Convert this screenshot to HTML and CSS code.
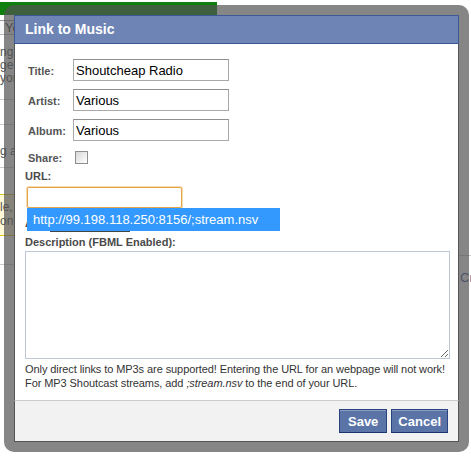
FILE: index.html
```html
<!DOCTYPE html>
<html lang="en">
<head>
<meta charset="UTF-8" />
<meta name="viewport" content="width=device-width, initial-scale=1" />
<title>Link to Music</title>
<link rel="stylesheet" href="styles.css">
</head>
<body>

<!-- page behind the dialog -->
<div class="page">
  <div class="topbar"></div>
  <div class="bg">
    <div class="bg-left">
      <div class="bg-tab">You</div>
      <div class="bg-text">ng<br>ge<br>yon</div>
      <div class="bg-rule first"></div>
      <div class="bg-rule second"></div>
      <div class="bg-text single">g as</div>
      <div class="bg-rule third"></div>
      <div class="bg-notice">le, E<br>on t</div>
      <div class="bg-rule fourth"></div>
    </div>
    <div class="bg-right">
      <div class="bg-rule right"></div>
      <div class="bg-link">Create</div>
    </div>
  </div>
</div>

<div class="dialog-frame">
  <div class="dialog">
    <h2 class="dialog-title">Link to Music</h2>
    <form class="dialog-body" id="music-form" novalidate>
      <table class="fields">
        <tr>
          <th><label for="title">Title:</label></th>
          <td><input type="text" id="title" name="title" value="Shoutcheap Radio" /></td>
        </tr>
        <tr>
          <th><label for="artist">Artist:</label></th>
          <td><input type="text" id="artist" name="artist" value="Various" /></td>
        </tr>
        <tr>
          <th><label for="album">Album:</label></th>
          <td><input type="text" id="album" name="album" value="Various" /></td>
        </tr>
        <tr>
          <th><label for="share">Share:</label></th>
          <td><input type="checkbox" id="share" name="share" class="check" /></td>
        </tr>
      </table>

      <label class="block-label" for="url">URL:</label>
      <div class="url-wrap">
        <input type="text" id="url" name="url" class="url-input" autocomplete="off" />
        <div class="suggest">http://99.198.118.250:8156/;stream.nsv</div>
      </div>

      <div class="hidden-row">
        <label class="block-label" for="autoplay">Autoplay:</label>
      </div>

      <label class="block-label" for="description">Description (FBML Enabled):</label>
      <textarea id="description" name="description"></textarea>

      <p class="help">Only direct links to MP3s are supported! Entering the URL for an webpage will not work!<br>
      For MP3 Shoutcast streams, add <em>;stream.nsv</em> to the end of your URL.</p>
    </form>
    <div class="dialog-footer">
      <button type="submit" form="music-form" class="btn save">Save</button>
      <button type="button" class="btn">Cancel</button>
    </div>
  </div>
</div>

</body>
</html>
```

FILE: styles.css
```css
body {
  margin: 0;
  background-color: #fff;
  font-family: "Liberation Sans", Arial, sans-serif;
  overflow: hidden;
}

/* page behind */
.topbar {
  margin-top: 2px;
  width: 217px;
  height: 13px;
  background-color: #0f7f0f;
}
.bg {
  display: flex;
  justify-content: space-between;
}
.bg-left {
  width: 40px;
  overflow: hidden;
  white-space: nowrap;
  color: #555;
  font-size: 12px;
}
.bg-tab {
  margin-top: 5px;
  height: 13px;
  padding-left: 5px;
  border-top: 1px solid #999;
  border-bottom: 1px solid #bbb;
  background-color: #f7f7f7;
  color: #333;
  font-size: 13px;
  line-height: 13px;
}
.bg-text {
  margin-top: 11px;
  line-height: 13px;
}
.bg-text.single {
  margin-top: 20px;
}
.bg-rule {
  border-top: 1px solid #ccc;
}
.bg-rule.first { margin-top: 14px; }
.bg-rule.second { margin-top: 24px; }
.bg-rule.third { margin-top: 9px; }
.bg-rule.fourth { margin-top: 28px; }
.bg-notice {
  margin-top: 26px;
  padding: 5px 0 5px 0;
  height: 30px;
  background-color: #fff9d7;
  border-top: 1px solid #e2c822;
  border-bottom: 1px solid #e2c822;
  line-height: 14px;
}
.bg-right {
  width: 12px;
  overflow: hidden;
  white-space: nowrap;
}
.bg-rule.right { margin-top: 240px; }
.bg-link {
  margin-top: 14px;
  padding-left: 1px;
  color: #3b5998;
  font-size: 13px;
}

/* dialog */
.dialog-frame {
  position: absolute;
  left: 4px;
  top: 5px;
  padding: 10px;
  border-radius: 10px;
  background-color: rgba(82, 82, 82, 0.7);
}
.dialog {
  width: 445px;
  background-color: #fff;
}
.dialog-title {
  margin: 0;
  padding: 5px 10px;
  border: 1px solid #3b5998;
  background-color: #6d84b4;
  color: #fff;
  font-size: 14px;
  font-weight: bold;
  line-height: 17px;
}
.dialog-body {
  margin: 0;
  padding: 10px;
  border-left: 1px solid #555;
  border-right: 1px solid #555;
}
.fields {
  margin-top: 1px;
  border-spacing: 0;
}
.fields th,
.fields td {
  padding: 4px 3px;
  vertical-align: middle;
  text-align: left;
  line-height: 13px;
}
.fields th {
  width: 39px;
  white-space: nowrap;
}
.fields label,
.block-label {
  color: #555;
  font-size: 11px;
  font-weight: bold;
  line-height: 13px;
}
.block-label {
  display: block;
  color: #4a4a4a;
}
input[type="text"] {
  display: block;
  box-sizing: border-box;
  width: 156px;
  height: 22px;
  margin: 0;
  padding: 1px 2px;
  border: 1px solid #a9a9a9;
  border-top-color: #8f8f8f;
  font-family: "Liberation Sans", Arial, sans-serif;
  font-size: 13px;
  color: #000;
  outline: none;
}
.check {
  appearance: none;
  display: block;
  width: 13px;
  height: 13px;
  margin: 2px 0 2px 2px;
  border: 1px solid #8e8f8f;
  background: linear-gradient(135deg, #d8d8d8, #fff);
}

.block-label[for="url"] {
  margin-bottom: 4px;
}
.url-wrap {
  position: relative;
  height: 21px;
}
input.url-input {
  width: 155px;
  height: 21px;
  margin-left: 2px;
  border: 1px solid #e2a548;
  border-radius: 2px;
  box-shadow: 0 0 0 1px rgba(240, 196, 120, 0.6);
}
.suggest {
  position: absolute;
  left: 2px;
  top: 21px;
  width: 247px;
  height: 23px;
  padding-left: 6px;
  background-color: #3399ff;
  color: #fff;
  font-size: 13px;
  line-height: 23px;
  white-space: nowrap;
  z-index: 1;
}
.suggest::after {
  content: "";
  position: absolute;
  left: 23px;
  top: 23px;
  width: 80px;
  height: 1px;
  background-color: #444;
}
.hidden-row {
  display: flex;
  align-items: center;
  height: 22px;
  margin-top: 4px;
}
.block-label[for="description"] {
  margin-top: 2px;
}
textarea {
  display: block;
  box-sizing: border-box;
  width: 425px;
  height: 108px;
  margin: 2px 0 0;
  border: 1px solid #bdc7d8;
  font-family: "Liberation Sans", Arial, sans-serif;
  font-size: 11px;
}
.help {
  margin: 3px 0 0;
  color: #333;
  font-size: 11px;
  line-height: 14px;
  letter-spacing: -0.08px;
  white-space: nowrap;
}

.dialog-footer {
  display: flex;
  justify-content: flex-end;
  gap: 4px;
  padding: 8px 10px;
  border: 1px solid #555;
  border-top-color: #ccc;
  background-color: #f2f2f2;
}
.btn {
  height: 24px;
  margin: 0;
  padding: 0 6px;
  border: 1px solid #29447e;
  border-bottom-color: #1a356e;
  background-color: #5b74a8;
  box-shadow: inset 0 1px 0 #8a9cc2;
  color: #fff;
  font-family: "Liberation Sans", Arial, sans-serif;
  font-size: 13px;
  font-weight: bold;
  cursor: pointer;
}
.btn.save {
  padding: 0 8px;
}
```
